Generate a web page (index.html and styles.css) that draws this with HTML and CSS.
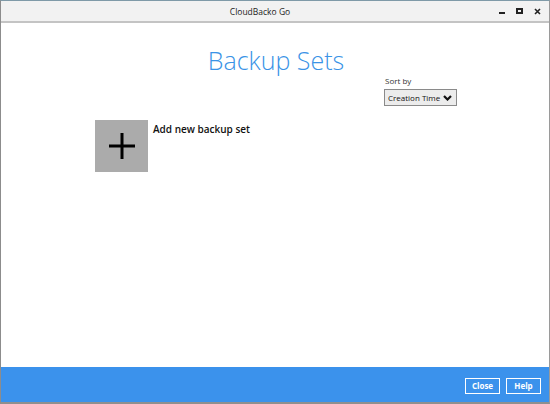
FILE: index.html
```html
<!DOCTYPE html>
<html>
<head>
<meta charset="utf-8">
<link rel="stylesheet" href="styles.css">
</head>
<body>
<div class="window">
  <div class="titlebar">
    <div class="title">CloudBacko Go</div>
    <div class="controls">
      <span class="ctl min"></span>
      <span class="ctl max"></span>
      <span class="ctl close">
        <svg width="7" height="7" viewBox="0 0 7 7"><path d="M1 1L6 6M6 1L1 6" stroke="#222" stroke-width="1.6"/></svg>
      </span>
    </div>
  </div>
  <div class="content">
    <h1 class="heading">Backup Sets</h1>
    <div class="sortrow">
      <div class="sort">
        <div class="sortlabel">Sort by</div>
        <div class="select">
          <span>Creation Time</span>
          <svg width="9" height="6" viewBox="0 0 9 6"><path d="M1 1L4.5 4.5L8 1" stroke="#111" stroke-width="2.2" fill="none"/></svg>
        </div>
      </div>
    </div>
    <div class="addrow">
      <div class="addbox">
        <svg width="28" height="28" viewBox="0 0 28 28"><path d="M14 1V27M1 14H27" stroke="#000" stroke-width="3"/></svg>
      </div>
      <div class="addlabel">Add new backup set</div>
    </div>
  </div>
  <div class="footer">
    <button class="btn">Close</button>
    <button class="btn">Help</button>
  </div>
</div>
</body>
</html>
```
FILE: styles.css
```css
html, body {
  margin: 0;
  padding: 0;
  width: 550px;
  height: 404px;
  overflow: hidden;
  background: #fff;
}
.window {
  box-sizing: border-box;
  width: 550px;
  height: 404px;
  display: flex;
  flex-direction: column;
  border-left: 1px solid #8c8c8c;
  border-right: 1px solid #9a9a9a;
  border-bottom: 2px solid #8f8f8f;
  border-top: 1px solid #7f9aa8;
  font-family: "Open Sans", "Noto Sans", sans-serif;
}
.titlebar {
  height: 20px;
  flex: none;
  background: #f2f2f2;
  border-bottom: 2px solid #c4c4c4;
  position: relative;
  display: flex;
  align-items: center;
  justify-content: center;
}
.title {
  font-size: 8.5px;
  color: #222;
  margin-left: -30px;
}
.controls {
  position: absolute;
  right: 8px;
  top: 0;
  height: 20px;
  display: flex;
  align-items: center;
  gap: 11px;
}
.ctl {
  width: 7px;
  height: 7px;
  display: flex;
  align-items: center;
  justify-content: center;
}
.ctl.min::after {
  content: "";
  width: 6px;
  height: 2px;
  background: #222;
  margin-top: 4px;
}
.ctl.max::after {
  content: "";
  box-sizing: border-box;
  width: 7px;
  height: 6px;
  border: 2px solid #222;
}
.content {
  flex: 1;
  background: #fff;
  display: flex;
  flex-direction: column;
}
.heading {
  margin: 20px 0 0 0;
  text-align: center;
  font-weight: 300;
  font-size: 25px;
  line-height: 34px;
  color: #3a93e6;
  padding-left: 2px;
}
.sortrow {
  display: flex;
  justify-content: flex-end;
  padding-right: 92px;
  margin-top: -2px;
}
.sortlabel {
  font-size: 8px;
  color: #333;
  margin-left: 1px;
  line-height: 11px;
}
.select {
  margin-top: 3px;
  box-sizing: border-box;
  width: 73px;
  height: 17px;
  border: 1px solid #8a8a8a;
  background: #ececec;
  display: flex;
  align-items: center;
  justify-content: space-between;
  padding: 0 4px 0 3px;
  font-size: 8px;
  color: #111;
  white-space: nowrap;
}
.addrow {
  display: flex;
  align-items: flex-start;
  margin-top: 14px;
  padding-left: 94px;
}
.addbox {
  width: 53px;
  height: 52px;
  background: #ababab;
  display: flex;
  align-items: center;
  justify-content: center;
}
.addlabel {
  margin-left: 5px;
  margin-top: 2px;
  font-size: 10px;
  font-weight: 600;
  color: #111;
}
.footer {
  height: 35px;
  flex: none;
  background: #3b92ec;
  display: flex;
  align-items: center;
  justify-content: flex-end;
  gap: 6px;
  padding-right: 8px;
}
.btn {
  box-sizing: border-box;
  height: 16px;
  width: 35px;
  padding: 0;
  border: 1.5px solid #fff;
  background: #3b92ec;
  color: #fff;
  font-family: "Open Sans", "Noto Sans", sans-serif;
  font-size: 8px;
  font-weight: 700;
  margin-top: 2px;
}
```
